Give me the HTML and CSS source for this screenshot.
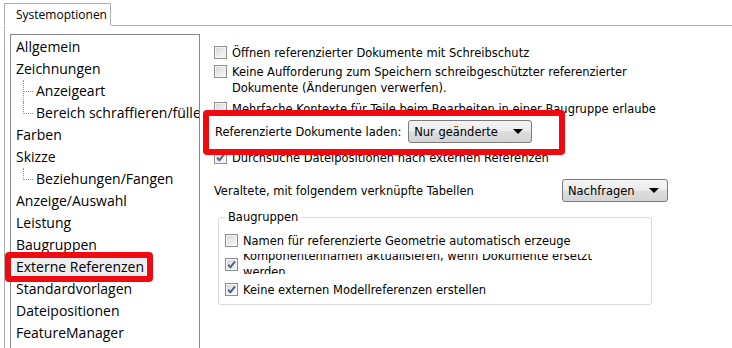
FILE: index.html
```html
<!DOCTYPE html>
<html lang="de">
<head>
<meta charset="utf-8">
<title>Systemoptionen</title>
<link rel="stylesheet" href="styles.css">
</head>
<body>
<div class="window">
  <div class="tabstrip">
    <div class="tab">Systemoptionen</div>
    <div class="tabfill"></div>
  </div>
  <div class="panel">
    <ul class="tree">
      <li class="node">Allgemein</li>
      <li class="node">Zeichnungen</li>
      <li class="node child">Anzeigeart</li>
      <li class="node child last">Bereich schraffieren/füllen</li>
      <li class="node">Farben</li>
      <li class="node">Skizze</li>
      <li class="node child last">Beziehungen/Fangen</li>
      <li class="node">Anzeige/Auswahl</li>
      <li class="node">Leistung</li>
      <li class="node">Baugruppen</li>
      <li class="node"><span class="sel">Externe Referenzen</span></li>
      <li class="node">Standardvorlagen</li>
      <li class="node">Dateipositionen</li>
      <li class="node">FeatureManager</li>
    </ul>

    <div class="options">
      <div class="cbrow r1">
        <span class="cb"></span>
        <span class="lbl">Öffnen referenzierter Dokumente mit Schreibschutz</span>
      </div>
      <div class="cbrow r2">
        <span class="cb"></span>
        <span class="lbl">Keine Aufforderung zum Speichern schreibgeschützter referenzierter<br>Dokumente (Änderungen verwerfen).</span>
      </div>
      <div class="cbrow r3">
        <span class="cb"></span>
        <span class="lbl">Mehrfache Kontexte für Teile beim Bearbeiten in einer Baugruppe erlaube</span>
      </div>
      <div class="comborow r-load">
        <span class="lbl">Referenzierte Dokumente laden:</span>
        <span class="combo combo-load">Nur geänderte<span class="arrow"></span></span>
      </div>
      <div class="cbrow r4">
        <span class="cb on"><svg viewBox="0 0 11 11" width="11" height="11"><path d="M2.2 5.6 L4.4 8.4 L9 2.4" fill="none" stroke="#4a5e8c" stroke-width="1.8" stroke-linejoin="round"/></svg></span>
        <span class="lbl">Durchsuche Dateipositionen nach externen Referenzen</span>
      </div>
      <div class="comborow r5">
        <span class="lbl grow">Veraltete, mit folgendem verknüpfte Tabellen</span>
        <span class="combo combo-ask">Nachfragen<span class="arrow"></span></span>
      </div>

      <fieldset class="group">
        <legend>Baugruppen</legend>
        <div class="cbrow ga">
          <span class="cb"></span>
          <span class="lbl">Namen für referenzierte Geometrie automatisch erzeuge</span>
        </div>
        <div class="cbrow gb">
          <span class="cb on"><svg viewBox="0 0 11 11" width="11" height="11"><path d="M2.2 5.6 L4.4 8.4 L9 2.4" fill="none" stroke="#4a5e8c" stroke-width="1.8" stroke-linejoin="round"/></svg></span>
          <span class="lbl clip"><span>Komponentennamen aktualisieren, wenn Dokumente ersetzt<br>werden</span></span>
        </div>
        <div class="cbrow gc">
          <span class="cb on"><svg viewBox="0 0 11 11" width="11" height="11"><path d="M2.2 5.6 L4.4 8.4 L9 2.4" fill="none" stroke="#4a5e8c" stroke-width="1.8" stroke-linejoin="round"/></svg></span>
          <span class="lbl">Keine externen Modellreferenzen erstellen</span>
        </div>
      </fieldset>
    </div>
  </div>

  <div class="mark mark-tree"></div>
  <div class="mark mark-load"></div>
</div>
</body>
</html>
```

FILE: styles.css
```css
html, body {
  margin: 0;
  padding: 0;
  background: #ffffff;
}

body {
  width: 732px;
  height: 348px;
  overflow: hidden;
  color: #000;
}

.window {
  position: relative;
  padding: 3px 0 0 4px;
}

/* tab strip */
.tabstrip {
  display: flex;
  height: 23px;
}

.tab {
  width: 94px;
  height: 21px;
  padding-left: 11px;
  border: 1px solid #acacac;
  border-bottom: none;
  background: #ffffff;
  font-family: "Open Sans", "Noto Sans", sans-serif;
  font-size: 12px;
  line-height: 21px;
}

.tabfill {
  flex: 1;
  border-bottom: 1px solid #acacac;
}

/* main panel */
.panel {
  display: flex;
  align-items: flex-start;
  border-left: 1px solid #acacac;
  padding: 8px 0 0 5px;
  height: 330px;
}

/* tree */
.tree {
  list-style: none;
  margin: 0;
  padding: 1px 0 0 0;
  width: 188px;
  height: 320px;
  border: 1px solid #828790;
  overflow: hidden;
  font-family: "Open Sans", "Noto Sans", sans-serif;
  font-size: 14px;
  flex: none;
}

.node {
  position: relative;
  height: 22px;
  line-height: 22px;
  padding-left: 5px;
  white-space: nowrap;
}

.node.child {
  padding-left: 25px;
}

.node.child::before {
  content: "";
  position: absolute;
  left: 12px;
  top: 0;
  width: 9px;
  height: 11px;
  border-left: 1px dotted #9a9a9a;
  border-bottom: 1px dotted #9a9a9a;
}

.node.child:not(.last)::after {
  content: "";
  position: absolute;
  left: 12px;
  top: 11px;
  bottom: 0;
  border-left: 1px dotted #9a9a9a;
}

.sel {
  background: #eeeeee;
  padding: 0 2px;
  margin-left: -2px;
}

/* options column */
.options {
  display: flex;
  flex-direction: column;
  margin-left: 14px;
  padding-top: 11px;
  font-family: "DejaVu Sans Condensed", "DejaVu Sans", sans-serif;
  font-stretch: condensed;
  font-size: 12.75px;
  line-height: 16px;
}

.cbrow {
  display: flex;
  align-items: flex-start;
  white-space: nowrap;
}

.cb {
  flex: none;
  width: 11px;
  height: 11px;
  margin: 1px 5px 0 0;
  border: 1px solid #8e8f8f;
  background: linear-gradient(135deg, #d6d6d6 0%, #ececec 60%, #f8f8f8 100%);
  box-shadow: inset 0 0 0 1px #f4f4f4;
  display: flex;
  align-items: center;
  justify-content: center;
}

.cb svg {
  display: block;
}

.r2 { margin-top: 3px; }
.r3 { margin-top: 5px; }

.comborow {
  display: flex;
  align-items: center;
  white-space: nowrap;
}

.r-load {
  margin-top: 3px;
  margin-left: 1px;
}

.r4 { margin-top: 7px; }

.r5 {
  margin-top: 13px;
  width: 454px;
}

.grow { flex: 1; }

.combo {
  position: relative;
  box-sizing: border-box;
  height: 23px;
  line-height: 21px;
  padding-left: 5px;
  border: 1px solid #7b7b7b;
  border-radius: 3px;
  background: linear-gradient(#f4f4f4 0%, #ececec 45%, #dcdcdc 55%, #d4d4d4 100%);
}

.combo-load {
  width: 124px;
  margin-left: 7px;
}

.combo-ask {
  width: 106px;
}

.arrow {
  position: absolute;
  right: 8px;
  top: 8px;
  width: 0;
  height: 0;
  border-left: 5px solid transparent;
  border-right: 5px solid transparent;
  border-top: 5px solid #000;
}

/* group box */
.group {
  margin: 7px 0 0 4px;
  width: 420px;
  padding: 8px 6px 6px 6px;
  border: 1px solid #d5dadf;
  border-radius: 3px;
}

.group legend {
  padding: 0 3px;
}

.gb {
  margin-top: 5px;
  align-items: center;
}

.gb .cb {
  margin-top: 0;
}

.clip {
  height: 20px;
  overflow: hidden;
  display: flex;
  align-items: center;
}

.gc { margin-top: 8px; }

/* red highlight marks drawn over the dialog */
.mark {
  position: absolute;
  box-sizing: border-box;
  border: 6px solid #f0090f;
  border-radius: 4px;
}

.mark-tree {
  left: 5px;
  top: 252px;
  width: 148px;
  height: 30px;
}

.mark-load {
  left: 203px;
  top: 110px;
  width: 362px;
  height: 45px;
}
```
